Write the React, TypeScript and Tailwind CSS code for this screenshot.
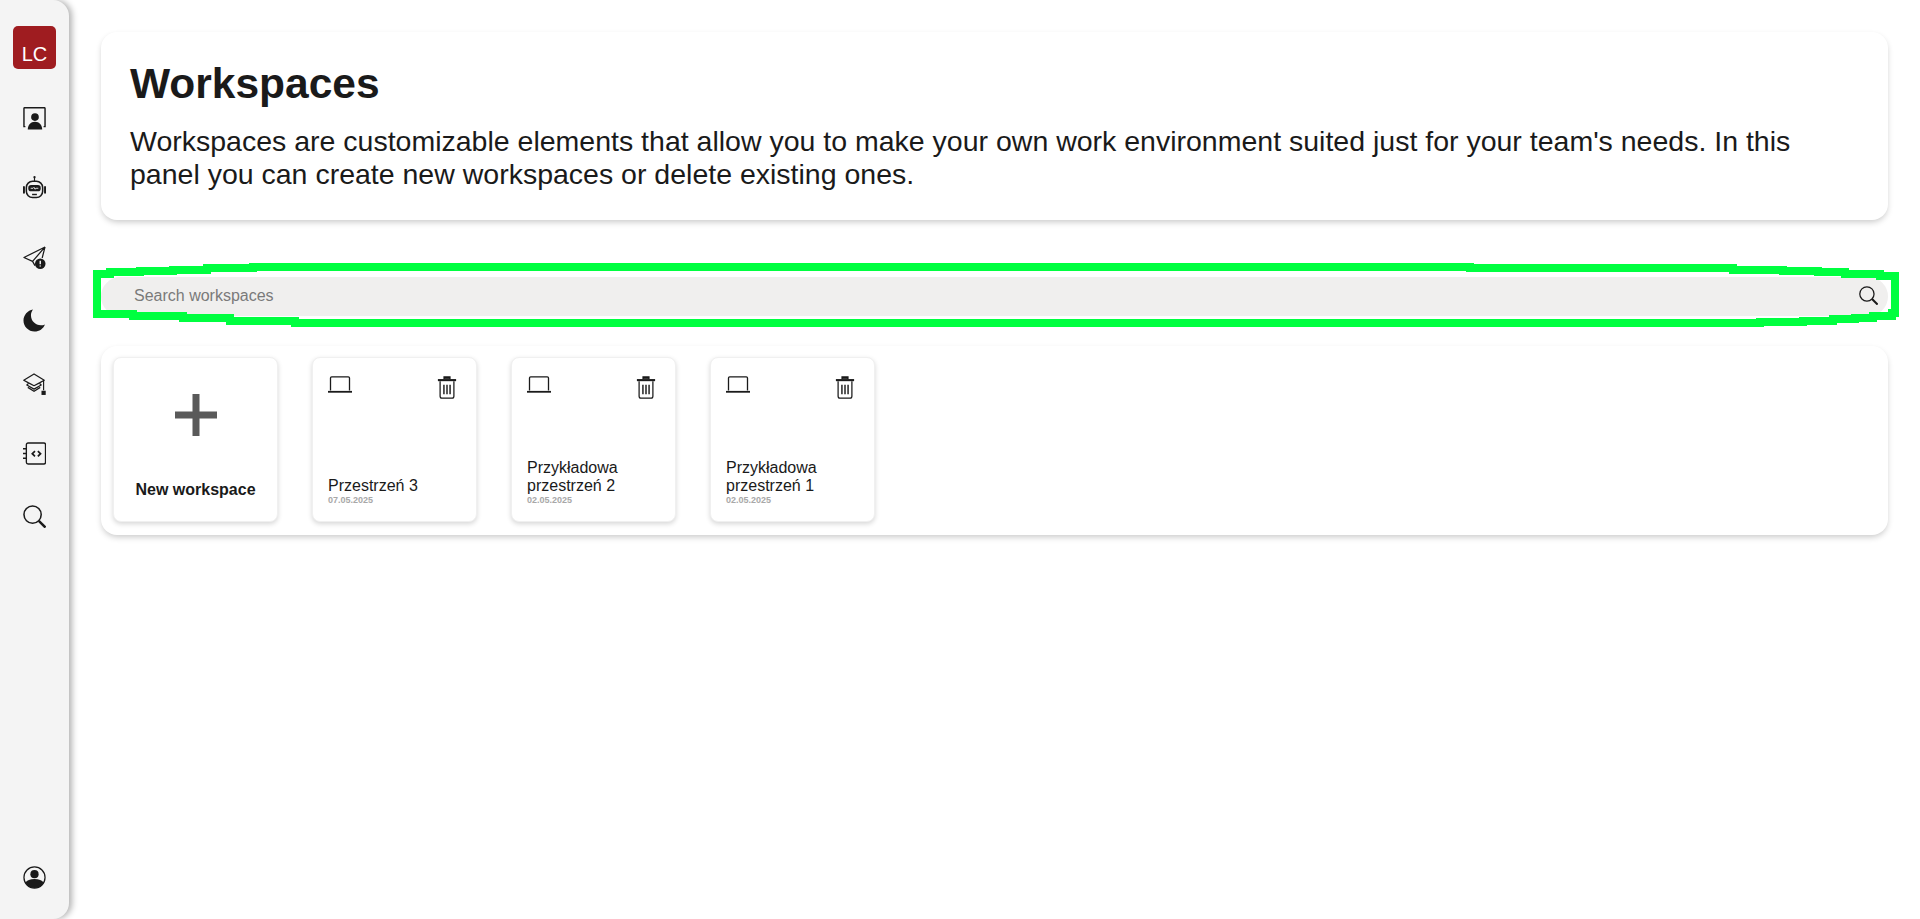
import React from 'react';

const iconClass = 'w-[23px] h-[23px] text-[#1a1a1a]';

const ProfileIcon = () => (
  <svg viewBox="0 0 24 24" className={iconClass} fill="none">
    <path d="M2.500 20.500h-1.500V1.500c0-.5.500-.8.800-.8h20.400c.4 0 .8.300.8.800v19h-1.500" stroke="currentColor" strokeWidth="1.500" />
    <circle cx="12.500" cy="10.500" r="4" fill="currentColor" />
    <path d="M5 23.500c0-4.500 3-8 7.500-8s7.500 3.500 7.500 8z" fill="currentColor" />
  </svg>
);

const RobotIcon = () => (
  <svg viewBox="0 0 24 24" className={iconClass} fill="none" stroke="currentColor">
    <circle cx="12" cy="1.300" r="1.200" fill="currentColor" stroke="none" />
    <path d="M12 2v3.500" strokeWidth="1.200" />
    <rect x="3.500" y="5.500" width="17" height="17" rx="6.500" strokeWidth="1.600" />
    <path d="M1 11.500v6M23 11.500v6" strokeWidth="2" strokeLinecap="round" />
    <rect x="5.500" y="9.500" width="13" height="6.500" rx="3" fill="currentColor" stroke="none" />
    <path d="M8 12.800h2.500l1-1 1 2 1-1H16" stroke="#fff" strokeWidth="0.900" />
    <path d="M9.500 19.300h5" strokeWidth="1.500" />
  </svg>
);

const SendAlertIcon = () => (
  <svg viewBox="0 0 24 24" className={iconClass} fill="none">
    <path d="M23 1 1 12l9 4 2.500 4.500M23 1 10 16M23 1l-3 11.500" stroke="currentColor" strokeWidth="1.300" strokeLinejoin="round" />
    <circle cx="18" cy="18.500" r="5.500" fill="currentColor" />
    <path d="M18 15.500v3.500M18 20.300v1.200" stroke="#f4f4f4" strokeWidth="1.500" />
  </svg>
);

const MoonIcon = () => (
  <svg viewBox="0 0 24 24" className={iconClass}>
    <path d="M10.500 .500C4.800 1.500.500 6.300.500 12c0 6.300 5.200 11.500 11.500 11.500 4.900 0 9.200-3 10.900-7.400-1.300.6-2.700.9-4.200.9C12.900 17 8.300 12.300 8.300 6.500c0-2.300.8-4.300 2.200-6z" fill="currentColor" />
  </svg>
);

const CapIcon = () => (
  <svg viewBox="0 0 24 24" className={iconClass} fill="none" stroke="currentColor">
    <path d="M11.500 1 .8 7.500l5 2.800 5.700 3 5.700-3 5-2.800z" strokeWidth="1.300" strokeLinejoin="round" />
    <path d="M5.800 10.800 4 12.500l7.500 4.300 7.500-4.300-1.800-1.700" strokeWidth="1.300" strokeLinejoin="round" />
    <path d="M5 15l6.500 4 6.500-4" strokeWidth="1.300" />
    <path d="M21.500 8v10" strokeWidth="1.200" />
    <rect x="19.300" y="18.500" width="4.400" height="4.400" fill="currentColor" stroke="none" />
  </svg>
);

const NotebookIcon = () => (
  <svg viewBox="0 0 24 24" className={iconClass} fill="none" stroke="currentColor">
    <rect x="3.500" y="1" width="20" height="22" rx="1.800" strokeWidth="1.400" />
    <path d="M0 7h4M0 12h4M0 17h4" strokeWidth="1.500" />
    <path d="m12.500 9.500-2.800 2.700 2.800 2.700M15.500 9.500l2.800 2.700-2.800 2.700" strokeWidth="1.800" />
  </svg>
);

const SearchIcon = ({ className = iconClass }: { className?: string }) => (
  <svg viewBox="0 0 24 24" className={className} fill="none" stroke="currentColor">
    <circle cx="10" cy="10" r="9" strokeWidth="1.600" />
    <path d="m16.500 16.500 7 7" strokeWidth="2.600" />
  </svg>
);

const UserIcon = () => (
  <svg viewBox="0 0 24 24" className={iconClass} fill="none">
    <circle cx="12" cy="12" r="11" stroke="currentColor" strokeWidth="1.300" />
    <circle cx="12" cy="8.500" r="4.300" fill="currentColor" />
    <path d="M2.500 17.500c1.500-2.800 5-4 9.500-4s8 1.200 9.500 4c-2 3.500-5.500 5.500-9.500 5.500s-7.500-2-9.500-5.500z" fill="currentColor" />
  </svg>
);

const LaptopIcon = () => (
  <svg viewBox="0 0 24 18" className="w-6 h-[18px] text-[#1a1a1a]" fill="none" stroke="currentColor">
    <path d="M2.500 14.500V2c0-.6.500-1.200 1.200-1.200h16.600c.7 0 1.200.6 1.200 1.200v12.500" strokeWidth="1.300" />
    <path d="M0 15.800h24" strokeWidth="1.800" />
  </svg>
);

const TrashIcon = () => (
  <svg viewBox="0 0 20 24" className="w-5 h-[23px] text-[#1a1a1a]" fill="none" stroke="currentColor">
    <path d="M0.500 4.300h19" strokeWidth="2.200" />
    <path d="M7 3V1h6v2" strokeWidth="1.500" fill="currentColor" />
    <path d="M2.800 5.500V21c0 1.100.8 2 2 2h10.400c1.200 0 2-.9 2-2V5.500" strokeWidth="1.300" />
    <path d="M6.800 9v10M10 9v10M13.200 9v10" strokeWidth="1.500" />
  </svg>
);

const Card = ({ title, date }: { title: React.ReactNode; date: string }) => (
  <div className="w-[165px] h-[165px] rounded-lg bg-white border border-[#f0f0f0] shadow-[0_2px_5px_rgba(0,0,0,0.16)] pl-[15px] pr-4 pt-[18px] pb-[16px] flex flex-col justify-between">
    <div className="flex items-start justify-between">
      <LaptopIcon />
      <div className="mr-[3px]">
        <TrashIcon />
      </div>
    </div>
    <div>
      <div className="text-base leading-[18px] text-[#1a1a1a]">{title}</div>
      <div className="text-[9px] leading-[10px] font-bold text-[#a8a8a8]">{date}</div>
    </div>
  </div>
);

export default function App() {
  return (
    <div className="relative flex h-[919px] bg-white font-['Liberation_Sans',sans-serif] overflow-hidden">
      <aside className="w-[69px] h-full shrink-0 rounded-r-2xl bg-[#f4f4f4] shadow-[3px_0_6px_rgba(0,0,0,0.3)] flex flex-col items-center pt-[26px] pb-[30px]">
        <div className="w-[43px] h-[43px] rounded-[5px] bg-[#9f1c20] text-white text-xl flex items-center justify-center pt-[13px]">
          LC
        </div>
        <div className="mt-[38px] flex flex-col items-center">
          <ProfileIcon />
          <div className="mt-[46px]"><RobotIcon /></div>
          <div className="mt-[47px]"><SendAlertIcon /></div>
          <div className="mt-[40px]"><MoonIcon /></div>
          <div className="mt-[41px]"><CapIcon /></div>
          <div className="mt-[46px]"><NotebookIcon /></div>
          <div className="mt-[40px]"><SearchIcon /></div>
        </div>
        <div className="mt-auto">
          <UserIcon />
        </div>
      </aside>

      <main className="flex-1 px-[32px] pt-[32px]">
        <section className="h-[188px] rounded-2xl bg-white shadow-[0_3px_6px_-1px_rgba(0,0,0,0.22)] pl-[29px] pr-[50px] pt-[27px]">
          <h1 className="text-[42.500px] leading-[50px] font-bold text-[#1a1a1a]">Workspaces</h1>
          <p className="mt-[16px] text-[28.500px] leading-[33px] text-[#1a1a1a]">
            Workspaces are customizable elements that allow you to make your own work environment suited just for your team's needs. In this panel you can create new workspaces or delete existing ones.
          </p>
        </section>

        <div className="mt-[57px] h-[39px] rounded-[20px] bg-[#f0efee] pl-[33px] pr-[10px] flex items-center justify-between">
          <span className="text-base text-[#7a7a7a] -mt-[2px]">Search workspaces</span>
          <SearchIcon className="w-[19px] h-[19px] text-[#1a1a1a] -mt-[2px]" />
        </div>

        <section className="mt-[30px] h-[189px] rounded-2xl bg-white shadow-[0_3px_6px_-1px_rgba(0,0,0,0.22)] px-3 pt-[11px] flex gap-[34px]">
          <div className="w-[165px] h-[165px] rounded-lg bg-white border border-[#f0f0f0] shadow-[0_2px_5px_rgba(0,0,0,0.16)] flex flex-col items-center pt-[36px]">
            <svg viewBox="0 0 42 42" className="w-[42px] h-[42px]">
              <path d="M17.500 0h7v17.500H42v7H24.500V42h-7V24.500H0v-7h17.500z" fill="#5a5a5a" />
            </svg>
            <div className="mt-[42px] text-base font-bold text-[#1a1a1a]">New workspace</div>
          </div>
          <Card title="Przestrzeń 3" date="07.05.2025" />
          <Card title={<>Przykładowa<br />przestrzeń 2</>} date="02.05.2025" />
          <Card title={<>Przykładowa<br />przestrzeń 1</>} date="02.05.2025" />
        </section>
      </main>

      {/* hand-drawn highlight round the search bar */}
      <svg className="absolute left-0 top-0 w-[1920px] h-[919px] pointer-events-none" viewBox="0 0 1920 919" fill="none" shapeRendering="crispEdges">
        <path
          d="M97 274 H110 V272 H140 V271 H173 V270 H207 V268 H253 V267 H1470 V268 H1733 V270 H1783 V271 H1818 V272 H1845 V274 H1880 V276 H1895 V313 H1892 V316 H1873 V318 H1855 V319 H1833 V321 H1803 V322 H1760 V323 H295 V321 H230 V318 H183 V316 H133 V314 H97 Z"
          stroke="#00ff40"
          strokeWidth="8"
        />
      </svg>
    </div>
  );
}
